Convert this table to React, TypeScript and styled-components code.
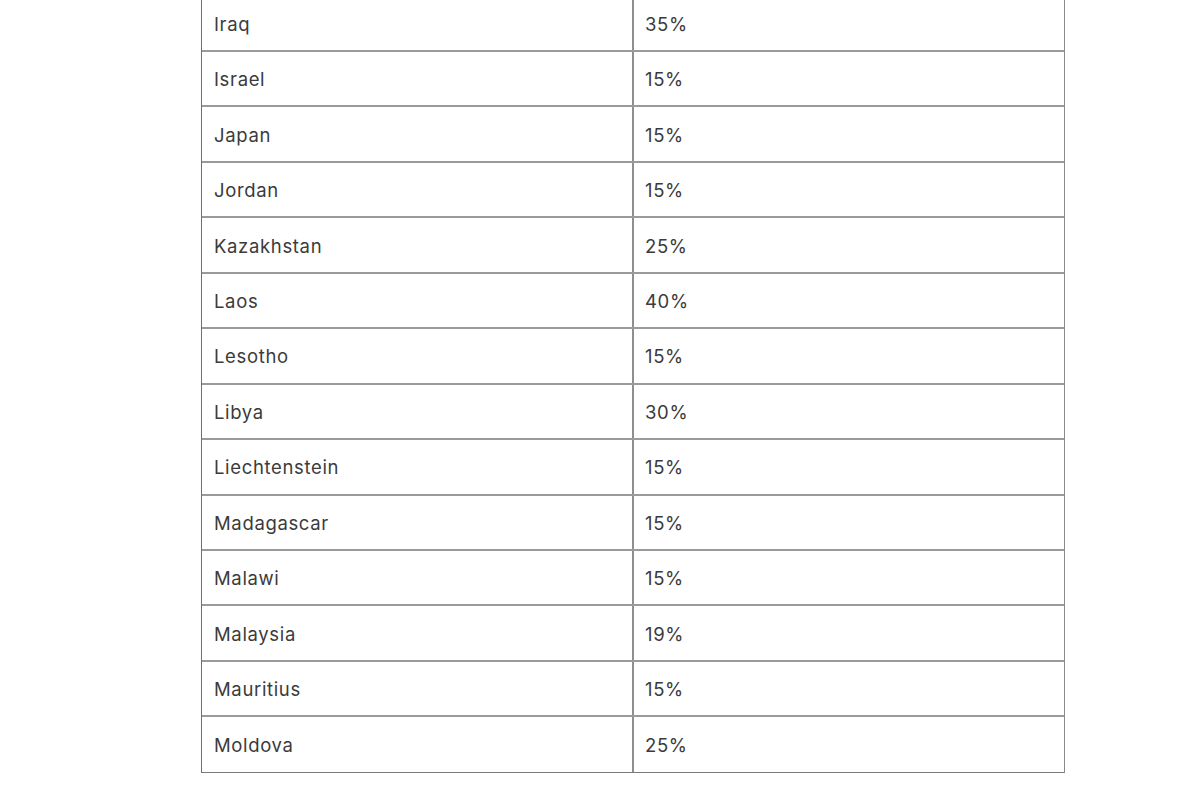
import React from "react";
import styled, { createGlobalStyle } from "styled-components";

const Global = createGlobalStyle`
  html, body { margin: 0; padding: 0; background: #ffffff; }
  body { font-family: Inter, "Noto Sans", "Liberation Sans", sans-serif; overflow: hidden; }
`;

const Page = styled.div`
  width: 1200px;
  height: 800px;
  overflow: hidden;
  background: #ffffff;
`;

const Table = styled.div`
  margin-top: -3.5px;
  margin-left: 201px;
  width: 864px;
  box-sizing: border-box;
  border-left: 1px solid #6f6f6f;
  border-right: 1px solid #8a8a8a;
  border-bottom: 1px solid #7a7a7a;
`;

const Row = styled.div<{ $last?: boolean }>`
  display: grid;
  grid-template-columns: 432px 1fr;
  height: ${(p) => (p.$last ? "54.46px" : "55.46px")};
  box-sizing: border-box;
  border-bottom: ${(p) => (p.$last ? "none" : "2px solid #9a9a9a")};
`;

const Cell = styled.div<{ $divider?: boolean }>`
  display: flex;
  align-items: center;
  padding-left: ${(p) => (p.$divider ? "12px" : "11px")};
  padding-top: 1px;
  box-sizing: border-box;
  font-size: 18.5px;
  color: #3b3b3b;
  letter-spacing: 0.65px;
  border-right: ${(p) => (p.$divider ? "2px solid #8f8f8f" : "none")};
`;

const data: [string, string][] = [
  ["Iraq", "35%"],
  ["Israel", "15%"],
  ["Japan", "15%"],
  ["Jordan", "15%"],
  ["Kazakhstan", "25%"],
  ["Laos", "40%"],
  ["Lesotho", "15%"],
  ["Libya", "30%"],
  ["Liechtenstein", "15%"],
  ["Madagascar", "15%"],
  ["Malawi", "15%"],
  ["Malaysia", "19%"],
  ["Mauritius", "15%"],
  ["Moldova", "25%"],
];

export default function App() {
  return (
    <Page>
      <Global />
      <Table>
        {data.map(([country, rate], i) => (
          <Row key={country} $last={i === data.length - 1}>
            <Cell $divider>{country}</Cell>
            <Cell>{rate}</Cell>
          </Row>
        ))}
      </Table>
    </Page>
  );
}
